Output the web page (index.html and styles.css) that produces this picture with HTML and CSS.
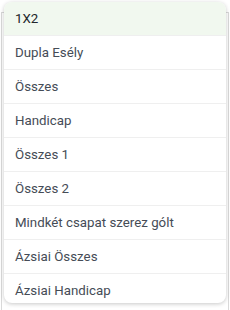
FILE: index.html
```html
<!DOCTYPE html>
<html lang="hu">
<head>
  <meta charset="UTF-8">
  <meta name="viewport" content="width=device-width, initial-scale=1.0">
  <title>Piacok</title>
  <link rel="stylesheet" href="styles.css">
</head>
<body>
  <div class="panel"></div>

  <ul class="dropdown">
    <li class="option active">1X2</li>
    <li class="option">Dupla Esély</li>
    <li class="option">Összes</li>
    <li class="option">Handicap</li>
    <li class="option">Összes 1</li>
    <li class="option">Összes 2</li>
    <li class="option">Mindkét csapat szerez gólt</li>
    <li class="option">Ázsiai Összes</li>
    <li class="option">Ázsiai Handicap</li>
  </ul>
</body>
</html>
```

FILE: styles.css
```css
* {
  margin: 0;
  padding: 0;
  box-sizing: border-box;
}

body {
  background-color: #fff;
  font-family: 'Roboto', sans-serif;
  width: 230px;
  height: 310px;
  overflow: hidden;
  position: relative;
}

.panel {
  margin: 12px 1px 0;
  height: 298px;
  border: 1px solid #d9d9d9;
  border-bottom: none;
}

.dropdown {
  list-style: none;
  position: absolute;
  top: 2px;
  left: 4px;
  width: 222px;
  height: 301px;
  overflow: hidden;
  background: #fff;
  border-radius: 8px;
  box-shadow: 0 1px 4px rgba(0, 0, 0, 0.22);
}

.option {
  height: 34px;
  padding: 0 11px 1px;
  display: flex;
  align-items: center;
  font-size: 13.3px;
  color: #454c56;
  border-bottom: 1px solid #efefef;
}

.option.active {
  background: #f1f8ef;
  color: #23262b;
}
```
